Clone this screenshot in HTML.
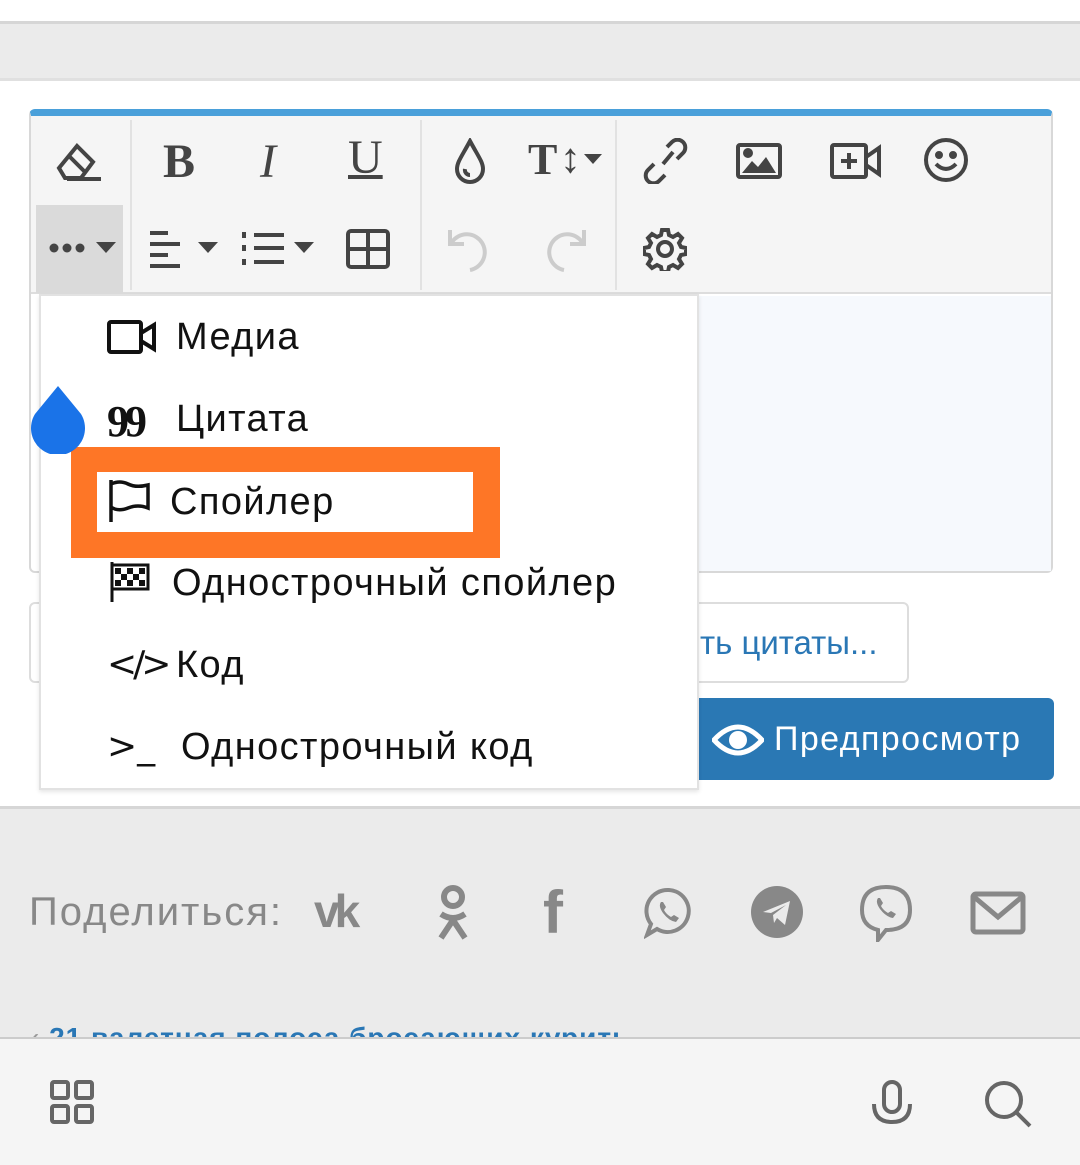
<!DOCTYPE html><html><head><meta charset="utf-8"><style>
*{margin:0;padding:0;box-sizing:border-box}
body{width:1080px;height:1165px;position:relative;overflow:hidden;background:#fff;font-family:"Liberation Sans",sans-serif}
.a{position:absolute}
.ic{position:absolute;fill:none;stroke:#444;stroke-width:4}
.mi{position:absolute;left:0;font-size:38px;letter-spacing:1.4px;color:#111;white-space:nowrap}
</style></head><body>
<div class="a" style="top:21px;left:0;width:1080px;height:60px;background:#ebebeb;border-top:3px solid #d6d6d6;border-bottom:3px solid #e0e0e0"></div>
<!-- editor -->
<div class="a" style="left:29px;top:109px;width:1024px;height:464px;border:2px solid #d8d8d8;border-top:7px solid #4aa0da;border-radius:6px;background:#fff"></div>
<div class="a" style="left:31px;top:116px;width:1020px;height:178px;background:#f5f5f5;border-bottom:2px solid #ddd"></div>
<div class="a" style="left:36px;top:205px;width:87px;height:88px;background:#dadada"></div>
<div class="a" style="left:130px;top:120px;width:2px;height:170px;background:#e2e2e2"></div>
<div class="a" style="left:420px;top:120px;width:2px;height:170px;background:#e2e2e2"></div>
<div class="a" style="left:615px;top:120px;width:2px;height:170px;background:#e2e2e2"></div>
<div class="a" style="left:698px;top:296px;width:353px;height:275px;background:#f6f9fd"></div>
<!-- toolbar row1 -->
<svg class="ic" style="left:55px;top:138px" width="50" height="46" viewBox="0 0 50 46"><path d="M4 30 L22 8 L38 24 L26 40 H10 Z M14 18 L30 34 M12 41 H46"/></svg>
<div class="a" style="left:163px;top:134px;font:bold 48px 'Liberation Serif',serif;color:#444">B</div>
<div class="a" style="left:260px;top:134px;font:italic 48px 'Liberation Serif',serif;color:#444">I</div>
<div class="a" style="left:348px;top:130px;font:48px 'Liberation Serif',serif;color:#444;text-decoration:underline;text-decoration-thickness:4px">U</div>
<svg class="ic" style="left:452px;top:138px" width="36" height="46" viewBox="0 0 36 46"><path d="M18 3 C10 18 5 24 5 31 a13 13 0 0 0 26 0 C31 24 26 18 18 3Z M13 31 a5 5 0 0 0 5 6"/></svg>
<div class="a" style="left:528px;top:134px;font:bold 44px 'Liberation Serif',serif;color:#444">T</div>
<div class="a" style="left:560px;top:134px;font:bold 42px sans-serif;color:#444">↕</div>
<svg class="a" style="left:584px;top:154px" width="18" height="12"><path d="M0 0H18L9 10Z" fill="#444"/></svg>
<svg class="ic" style="left:643px;top:138px" width="46" height="46" viewBox="0 0 46 46"><path d="M20 26 L30 14 M24 9 l5-5 a7 7 0 0 1 11 11 l-6 6 M22 37 l-6 6 a7 7 0 0 1 -11 -11 l6 -6"/></svg>
<svg class="ic" style="left:736px;top:143px" width="46" height="36" viewBox="0 0 46 36"><rect x="2" y="2" width="42" height="32" rx="2"/><path d="M6 30 L16 18 L22 24 L30 14 L40 30Z" fill="#444" stroke="none"/><circle cx="12" cy="10" r="3" fill="#444"/></svg>
<svg class="ic" style="left:830px;top:143px" width="52" height="36" viewBox="0 0 52 36"><rect x="2" y="2" width="34" height="32" rx="2"/><path d="M36 14 L49 5 V31 L36 22 M19 10 V26 M11 18 H27"/></svg>
<svg class="ic" style="left:923px;top:137px" width="46" height="46" viewBox="0 0 46 46"><circle cx="23" cy="23" r="20"/><circle cx="16" cy="18" r="2" fill="#444"/><circle cx="30" cy="18" r="2" fill="#444"/><path d="M13 27 Q23 37 33 27"/></svg>
<!-- row2 -->
<svg class="a" style="left:48px;top:242px" width="40" height="12"><circle cx="6" cy="6" r="4.5" fill="#444"/><circle cx="19" cy="6" r="4.5" fill="#444"/><circle cx="32" cy="6" r="4.5" fill="#444"/></svg>
<svg class="a" style="left:96px;top:242px" width="20" height="12"><path d="M0 0H20L10 11Z" fill="#444"/></svg>
<svg class="ic" style="left:150px;top:230px" width="70" height="38" viewBox="0 0 70 38"><path d="M0 3H18M0 14H30M0 25H18M0 36H30"/><path d="M48 12H68L58 23Z" fill="#444" stroke="none"/></svg>
<svg class="ic" style="left:242px;top:230px" width="72" height="38" viewBox="0 0 72 38"><path d="M2 2V8M2 15V21M2 29V35M12 5H42M12 18H42M12 32H42"/><path d="M52 12H72L62 23Z" fill="#444" stroke="none"/></svg>
<svg class="ic" style="left:346px;top:229px" width="44" height="40" viewBox="0 0 44 40"><rect x="2" y="2" width="40" height="36" rx="3"/><path d="M22 2V38M2 20H42"/></svg>
<svg class="ic" style="left:446px;top:226px;stroke:#ccc" width="48" height="48" viewBox="0 0 48 48"><path d="M4 4V18H18M6 16 A18 18 0 1 1 24 44"/></svg>
<svg class="ic" style="left:540px;top:226px;stroke:#ccc" width="48" height="48" viewBox="0 0 48 48"><path d="M44 4V18H30M42 16 A18 18 0 1 0 24 44"/></svg>
<svg class="ic" style="left:643px;top:227px" width="44" height="44" viewBox="0 0 44 44"><circle cx="22" cy="22" r="7"/><path d="M19 3h6l1 5 4 2 5-3 4 4-3 5 2 4 5 1v6l-5 1-2 4 3 5-4 4-5-3-4 2-1 5h-6l-1-5-4-2-5 3-4-4 3-5-2-4-5-1v-6l5-1 2-4-3-5 4-4 5 3 4-2z"/></svg>
<!-- lower form -->
<div class="a" style="left:29px;top:602px;width:880px;height:81px;border:2px solid #ddd;border-radius:6px;background:#fff"></div>
<div class="a" style="left:700px;top:624px;font-size:33px;color:#2a77b5">ть цитаты...</div>
<div class="a" style="left:698px;top:698px;width:356px;height:82px;background:#2a78b4;border-radius:0 6px 6px 0"></div>
<svg class="a" style="left:712px;top:722px" width="52" height="36" viewBox="0 0 52 36"><path d="M2 18 Q26 -8 50 18 Q26 44 2 18Z" fill="none" stroke="#fff" stroke-width="5"/><circle cx="26" cy="18" r="9" fill="#fff"/></svg>
<div class="a" style="left:774px;top:720px;font-size:34px;letter-spacing:1.4px;color:#fff">Предпросмотр</div>
<!-- dropdown -->
<div class="a" style="left:39px;top:294px;width:660px;height:496px;background:#fff;border:2px solid #e2e2e2;box-shadow:0 2px 4px rgba(0,0,0,.1)">
<svg class="a" style="left:66px;top:24px" width="50" height="34" viewBox="0 0 50 34"><g fill="none" stroke="#111" stroke-width="4"><rect x="2" y="2" width="32" height="30" rx="2"/><path d="M34 13 L47 5 V29 L34 21"/></g></svg>
<div class="mi" style="left:135px;top:20px">Медиа</div>
<div class="a" style="left:66px;top:100px;font:bold 44px 'Liberation Serif',serif;color:#111;letter-spacing:-4px">99</div>
<div class="mi" style="left:135px;top:102px">Цитата</div>
<svg class="a" style="left:66px;top:266px" width="46" height="40" viewBox="0 0 46 40"><g fill="none" stroke="#111" stroke-width="3"><path d="M5 0 V40"/><rect x="5" y="3" width="36" height="24" fill="#fff"/><path d="M5 3H41V27H5" /></g><path d="M8 6h6v6h-6zM20 6h6v6h-6zM32 6h6v6h-6zM14 12h6v6h-6zM26 12h6v6h-6zM8 18h6v6h-6zM20 18h6v6h-6zM32 18h6v6h-6z" fill="#111"/></svg>
<div class="mi" style="left:131px;top:266px">Однострочный спойлер</div>
<div class="a" style="left:66px;top:348px;font:36px 'DejaVu Sans',sans-serif;color:#111;letter-spacing:-4px">&lt;/&gt;</div>
<div class="mi" style="left:135px;top:348px">Код</div>
<div class="a" style="left:66px;top:430px;font:36px 'DejaVu Sans',sans-serif;color:#111">&gt;_</div>
<div class="mi" style="left:140px;top:430px">Однострочный код</div>
</div>
<!-- orange highlight -->
<div class="a" style="left:71px;top:447px;width:429px;height:111px;background:#fe7626"></div>
<div class="a" style="left:97px;top:472px;width:376px;height:60px;background:#fff"></div>
<svg class="a" style="left:106px;top:480px" width="46" height="42" viewBox="0 0 46 42"><path d="M5 0V42 M5 4 Q14 0 22 4 T42 5 V28 Q32 24 22 28 T5 27" fill="none" stroke="#111" stroke-width="3.5"/></svg>
<div class="mi" style="left:170px;top:481px">Спойлер</div>
<!-- blue drop -->
<svg class="a" style="left:29px;top:384px" width="58" height="70" viewBox="0 0 58 70"><path d="M29 2 L52 30 A27 27 0 1 1 6 30 Z" fill="#1a73e8"/></svg>
<!-- share section -->
<div class="a" style="left:0;top:806px;width:1080px;height:232px;background:#ebebeb;border-top:3px solid #d6d6d6"></div>
<div class="a" style="left:29px;top:890px;font-size:40px;letter-spacing:2px;color:#888">Поделиться:</div>
<div class="a" style="left:314px;top:884px;font:bold 46px sans-serif;color:#888;letter-spacing:-5px">vk</div>
<svg class="a" style="left:434px;top:884px" width="38" height="58" viewBox="0 0 38 58"><g fill="none" stroke="#888" stroke-width="6"><circle cx="19" cy="13" r="9"/><path d="M7 30 Q19 38 31 30 M19 36 L7 54 M19 36 L31 54"/></g></svg>
<div class="a" style="left:543px;top:878px;font:bold 60px sans-serif;color:#888">f</div>
<svg class="a" style="left:644px;top:887px" width="50" height="52" viewBox="0 0 50 52"><path d="M25 3 A21 21 0 1 1 13 42 L3 48 L7 37 A21 21 0 0 1 25 3Z" fill="none" stroke="#888" stroke-width="4"/><path d="M17 15 q-3 4 2 11 q6 8 13 9 l3-4 -5-3 -3 2 q-5-3 -7-7 l2-3 -3-5z" fill="#888"/></svg>
<svg class="a" style="left:750px;top:885px" width="54" height="54" viewBox="0 0 54 54"><circle cx="27" cy="27" r="26" fill="#888"/><path d="M13 27 L40 16 L35 40 L27 33 L24 38 L23 30 L36 20 L21 28Z" fill="#ebebeb"/></svg>
<svg class="a" style="left:858px;top:884px" width="56" height="58" viewBox="0 0 56 58"><path d="M28 3 Q52 3 52 26 Q52 46 28 46 L20 56 L20 46 Q4 42 4 26 Q4 3 28 3Z" fill="none" stroke="#888" stroke-width="4"/><path d="M20 14 q-3 4 2 11 q6 8 13 9 l3-4 -5-3 -3 2 q-5-3 -7-7 l2-3 -3-5z" fill="#888"/></svg>
<svg class="a" style="left:970px;top:891px" width="56" height="44" viewBox="0 0 56 44"><rect x="3" y="3" width="50" height="38" rx="3" fill="none" stroke="#888" stroke-width="5"/><path d="M3 5 L28 26 L53 5" fill="none" stroke="#888" stroke-width="5"/></svg>
<div class="a" style="left:30px;top:1022px;font:bold 28px sans-serif;letter-spacing:1px;color:#2a77b5;white-space:nowrap"><span style="color:#999;font-weight:normal">‹ </span>21 валетная полоса бросающих курить</div>
<!-- bottom bar -->
<div class="a" style="left:0;top:1037px;width:1080px;height:128px;background:#f5f5f5;border-top:2px solid #ccc"></div>
<svg class="a" style="left:50px;top:1080px" width="44" height="44" viewBox="0 0 44 44"><g fill="none" stroke="#666" stroke-width="4"><rect x="2" y="2" width="16" height="16" rx="2"/><rect x="26" y="2" width="16" height="16" rx="2"/><rect x="2" y="26" width="16" height="16" rx="2"/><rect x="26" y="26" width="16" height="16" rx="2"/></g></svg>
<svg class="a" style="left:870px;top:1080px" width="44" height="46" viewBox="0 0 44 46"><g fill="none" stroke="#666" stroke-width="4"><rect x="14" y="2" width="16" height="30" rx="8"/><path d="M4 24 Q4 42 22 42 Q40 42 40 24"/></g></svg>
<svg class="a" style="left:984px;top:1080px" width="50" height="48" viewBox="0 0 50 48"><g fill="none" stroke="#666" stroke-width="4"><circle cx="20" cy="20" r="17"/><path d="M32 32 L46 46"/></g></svg>
</body></html>
